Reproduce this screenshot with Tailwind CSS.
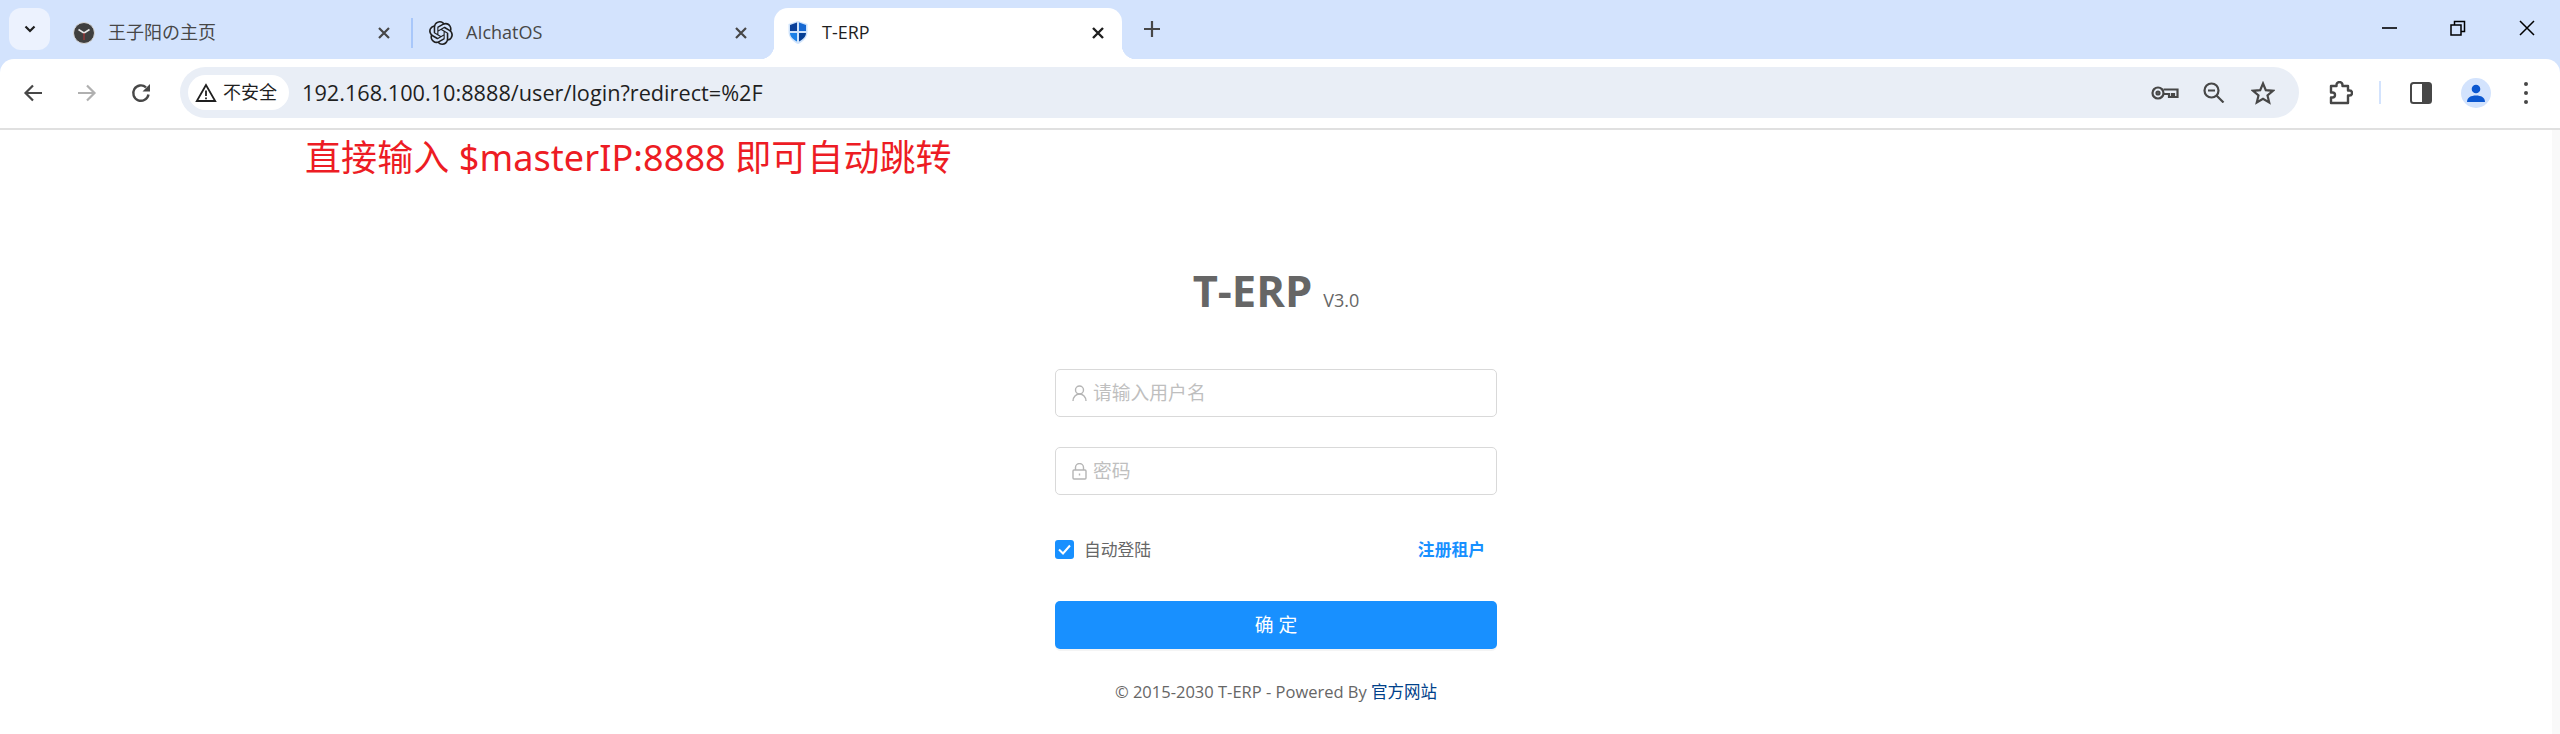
<!DOCTYPE html>
<html lang="zh">
<head>
<meta charset="utf-8">
<title>T-ERP</title>
<script src="https://cdn.jsdelivr.net/npm/@tailwindcss/browser@4"></script>
</head>
<body class="h-[734px] w-[2560px] overflow-hidden bg-white font-['Open_Sans','Noto_Sans_CJK_SC',sans-serif]">

<!-- tab strip -->
<div class="relative flex h-[59px] items-start bg-[#d3e3fd]">
  <button class="ml-[9px] mt-2 flex h-[42px] w-[41px] items-center justify-center rounded-[12px] bg-[#ecf2fe]">
    <svg width="14" height="14" viewBox="0 0 14 14" fill="none" stroke="#1f1f1f" stroke-width="2.2"><path d="M2.500 4.500 7 9l4.500-4.500"/></svg>
  </button>

  <div class="ml-[23px] mt-2 flex h-[51px] w-[338px] shrink-0 items-center pb-[2px]">
    <svg width="22" height="22" viewBox="0 0 22 22" class="shrink-0"><circle cx="11" cy="11" r="10.500" fill="#3f3f3f" stroke="#d8d8d8" stroke-width="1"/><path d="M11 11 5.500 7.500M11 11l5.500-3.500" stroke="#e8e8e8" stroke-width="1.600"/><path d="M11 11v7" stroke="#b33" stroke-width="1"/></svg>
    <span class="ml-[13px] text-[18px] text-[#474747]">王子阳の主页</span>
    <svg width="14" height="14" viewBox="0 0 14 14" class="ml-auto mr-[20px]" stroke="#474747" stroke-width="2.2"><path d="m2 2 10 10M12 2 2 12"/></svg>
  </div>
  <div class="mt-[18px] h-[30px] w-[2px] shrink-0 bg-[#a8c7fa]"></div>

  <div class="ml-[16px] mt-2 flex h-[51px] w-[337px] shrink-0 items-center pb-[2px]">
    <svg width="24" height="24" viewBox="0 0 24 24" fill="#1f1f1f" class="shrink-0"><path d="M22.2819 9.8211a5.9847 5.9847 0 0 0-.5157-4.9108 6.0462 6.0462 0 0 0-6.5098-2.9A6.0651 6.0651 0 0 0 4.9807 4.1818a5.9847 5.9847 0 0 0-3.9977 2.9 6.0462 6.0462 0 0 0 .7427 7.0966 5.98 5.98 0 0 0 .511 4.9107 6.051 6.051 0 0 0 6.5146 2.9001A5.9847 5.9847 0 0 0 13.2599 24a6.0557 6.0557 0 0 0 5.7718-4.2058 5.9894 5.9894 0 0 0 3.9977-2.9001 6.0557 6.0557 0 0 0-.7475-7.0729zm-9.022 12.6081a4.4755 4.4755 0 0 1-2.8764-1.0408l.1419-.0804 4.7783-2.7582a.7948.7948 0 0 0 .3927-.6813v-6.7369l2.02 1.1686a.071.071 0 0 1 .038.052v5.5826a4.504 4.504 0 0 1-4.4945 4.4944zm-9.6607-4.1254a4.4708 4.4708 0 0 1-.5346-3.0137l.142.0852 4.783 2.7582a.7712.7712 0 0 0 .7806 0l5.8428-3.3685v2.3324a.0804.0804 0 0 1-.0332.0615L9.74 19.9502a4.4992 4.4992 0 0 1-6.1408-1.6464zM2.3408 7.8956a4.485 4.485 0 0 1 2.3655-1.9728V11.6a.7664.7664 0 0 0 .3879.6765l5.8144 3.3543-2.0201 1.1685a.0757.0757 0 0 1-.071 0l-4.8303-2.7865A4.504 4.504 0 0 1 2.3408 7.872zm16.5963 3.8558L13.1038 8.364 15.1192 7.2a.0757.0757 0 0 1 .071 0l4.8303 2.7913a4.4944 4.4944 0 0 1-.6765 8.1042v-5.6772a.79.79 0 0 0-.407-.667zm2.0107-3.0231l-.142-.0852-4.7735-2.7818a.7759.7759 0 0 0-.7854 0L9.409 9.2297V6.8974a.0662.0662 0 0 1 .0284-.0615l4.8303-2.7866a4.4992 4.4992 0 0 1 6.6802 4.66zM8.3065 12.863l-2.02-1.1638a.0804.0804 0 0 1-.038-.0567V6.0742a4.4992 4.4992 0 0 1 7.3757-3.4537l-.142.0805L8.704 5.459a.7948.7948 0 0 0-.3927.6813zm1.0976-2.3654l2.602-1.4998 2.6069 1.4998v2.9994l-2.5974 1.4997-2.6067-1.4997Z"/></svg>
    <span class="ml-[13px] text-[18px] text-[#474747]">AIchatOS</span>
    <svg width="14" height="14" viewBox="0 0 14 14" class="ml-auto mr-[18px]" stroke="#474747" stroke-width="2.2"><path d="m2 2 10 10M12 2 2 12"/></svg>
  </div>

  <div class="relative ml-[8px] mt-2 flex h-[51px] w-[348px] shrink-0 items-center rounded-t-[14px] bg-white pb-[2px] pl-[14px]">
    <span class="absolute -left-[14px] bottom-0 h-[14px] w-[14px] bg-[radial-gradient(circle_at_0_0,#d3e3fd_14px,#fff_14.500px)]"></span>
    <svg width="20" height="23" viewBox="0 0 20 23" class="shrink-0"><path d="M10 0 19.500 3v8c0 5.500-4.500 10-9.500 12C5 21 .5 16.500.5 11V3Z" fill="#cfe3fb"/><path d="M9 1.500V10H2V4Z" fill="#0a3f99"/><path d="M11 1.500 18 4v6h-7Z" fill="#1668d2"/><path d="M2 12h7v8.500C5 18.500 2 15.500 2 12Z" fill="#1a7fe6"/><path d="M11 12h7c0 3.500-3 6.500-7 8.500Z" fill="#063f95"/></svg>
    <span class="ml-[14px] text-[18px] text-[#1f1f1f]">T-ERP</span>
    <svg width="14" height="14" viewBox="0 0 14 14" class="ml-auto mr-[17px]" stroke="#1f1f1f" stroke-width="2.4"><path d="m2 2 10 10M12 2 2 12"/></svg>
    <span class="absolute -right-[14px] bottom-0 h-[14px] w-[14px] bg-[radial-gradient(circle_at_100%_0,#d3e3fd_14px,#fff_14.500px)]"></span>
  </div>

  <svg width="16" height="16" viewBox="0 0 16 16" stroke="#474747" stroke-width="2.2" class="ml-[22px] mt-[21px]"><path d="M8 0v16M0 8h16"/></svg>

  <div class="ml-auto flex items-center pt-[20px]">
    <svg width="16" height="16" viewBox="0 0 16 16" stroke="#000" stroke-width="1.600"><path d="M1 8h15"/></svg>
    <svg width="16" height="16" viewBox="0 0 16 16" fill="none" stroke="#000" stroke-width="1.500" class="ml-[53px]"><path d="M1 5h10v10H1zM4.500 5V1.500h10v10H11"/></svg>
    <svg width="16" height="16" viewBox="0 0 16 16" stroke="#000" stroke-width="1.500" class="ml-[53px] mr-[25px]"><path d="m1 1 14 14M15 1 1 15"/></svg>
  </div>
</div>

<!-- toolbar -->
<div class="flex h-[71px] items-center border-b-2 border-[#e0e0e0] bg-[#d3e3fd]">
  <div class="flex h-full w-full items-center rounded-t-[14px] bg-white pb-[2px]">
    <svg width="20" height="18" viewBox="0 0 20 18" fill="none" stroke="#474747" stroke-width="2.2" class="ml-[23px]"><path d="M19 9H3M10 1.500 2.500 9l7.500 7.500"/></svg>
    <svg width="20" height="18" viewBox="0 0 20 18" fill="none" stroke="#b0b0b0" stroke-width="2.2" class="ml-[34px]"><path d="M1 9h16M10 1.500 17.500 9 10 16.500"/></svg>
    <svg width="20" height="20" viewBox="0 0 20 20" fill="none" stroke="#474747" stroke-width="2.400" class="ml-[34px]"><path d="M17.500 11.500A7.700 7.700 0 1 1 15 4.300"/><path d="M19 1v7.500h-7.500Z" stroke="none" fill="#474747"/></svg>

    <div class="ml-[29px] flex h-[51px] w-[2119px] items-center rounded-full bg-[#e9eef6] pl-2">
      <div class="flex h-[35px] w-[101px] items-center rounded-full bg-white pl-[7px]">
        <svg width="22" height="20" viewBox="0 0 22 20" fill="none" stroke="#1f1f1f" stroke-width="1.800"><path d="M11 2 1.800 18h18.400Z"/><path d="M11 7.500v5.500M11 14.500v1.800"/></svg>
        <span class="ml-[6px] text-[18px] text-[#1f1f1f]">不安全</span>
      </div>
      <span class="ml-[13px] pt-[2px] text-[21.700px] text-[#1f1f1f]">192.168.100.10:8888/user/login?redirect=%2F</span>
      <div class="ml-auto flex items-center pr-[24px]">
        <svg width="28" height="14" viewBox="0 0 28 14" fill="none" stroke="#474747" stroke-width="2.200"><circle cx="7" cy="7" r="5.500"/><circle cx="7" cy="7" r="1.500"/><path d="M12.500 3.500h14V11H23V8h-2v3h-3V8h-5.500"/></svg>
        <svg width="22" height="21" viewBox="0 0 22 21" fill="none" stroke="#474747" stroke-width="2.200" class="ml-[24px]"><circle cx="8.500" cy="8.500" r="7"/><path d="M5 8.500h7M13.500 13.500l7 7"/></svg>
        <svg width="24" height="24" viewBox="0 0 24 24" fill="none" stroke="#474747" stroke-width="2.200" class="ml-[26px]"><path d="m12 2.500 2.800 6.700 7.200.6-5.500 4.700 1.700 7L12 17.800 5.800 21.500l1.700-7L2 9.800l7.200-.6Z"/></svg>
      </div>
    </div>

    <svg width="25" height="24" viewBox="0 0 25 24" fill="none" stroke="#474747" stroke-width="2.400" class="ml-[29px]"><path d="M3 5h5.500V4a3 3 0 0 1 6 0v1H20v4.500h1.500a2.500 2.500 0 0 1 0 5H20V22H3v-5.500h1.500a2.500 2.500 0 0 0 0-5H3Z" stroke-linejoin="round"/></svg>
    <div class="ml-[26px] h-[23px] w-[2px] bg-[#d3e3fd]"></div>
    <svg width="22" height="22" viewBox="0 0 22 22" class="ml-[29px]"><rect x="1" y="1" width="20" height="20" rx="2.500" fill="#fff" stroke="#474747" stroke-width="2"/><path d="M12 1h7a2 2 0 0 1 2 2v16a2 2 0 0 1-2 2h-7Z" fill="#474747"/></svg>
    <div class="ml-[29px] flex h-[30px] w-[30px] items-center justify-center overflow-hidden rounded-full bg-[#d3e3fd]">
      <svg width="20" height="20" viewBox="0 0 20 20" fill="#0b57d0"><circle cx="10" cy="6" r="4.300"/><path d="M1 19c0-4.500 4-6.500 9-6.500s9 2 9 6.500Z"/></svg>
    </div>
    <div class="ml-[33px] flex flex-col gap-[5px]">
      <span class="h-1 w-1 rounded-full bg-[#474747]"></span>
      <span class="h-1 w-1 rounded-full bg-[#474747]"></span>
      <span class="h-1 w-1 rounded-full bg-[#474747]"></span>
    </div>
  </div>
</div>

<!-- page -->
<div class="flex h-[604px]">
  <div class="min-w-0 flex-1">
    <p class="ml-[305px] pt-[3px] text-[36px] leading-[50px] tracking-[0.08px] text-[#ed1c24] font-['Noto_Sans','Noto_Sans_CJK_SC',sans-serif]">直接输入 $masterIP:8888 即可自动跳转</p>

    <div class="mx-auto mt-[81px] w-[442px]">
      <div class="flex h-[54px] items-baseline justify-center">
        <h1 class="text-[43.500px] font-bold leading-[54px] text-[#666]">T-ERP</h1>
        <span class="ml-[11px] text-[18px] text-[#666]">V3.0</span>
      </div>

      <div class="mt-[51px] flex h-[48px] items-center rounded-[5px] border border-[#d9d9d9] pl-[16px]">
        <svg width="15" height="17" viewBox="0 0 15 17" fill="none" stroke="#b5b5b5" stroke-width="1.400"><circle cx="7.500" cy="5" r="4"/><path d="M1 16c0-4 3-7 6.500-7S14 12 14 16"/></svg>
        <span class="ml-[6px] text-[18.800px] text-[#bfbfbf]">请输入用户名</span>
      </div>

      <div class="mt-[30px] flex h-[48px] items-center rounded-[5px] border border-[#d9d9d9] pl-[16px]">
        <svg width="15" height="17" viewBox="0 0 15 17" fill="none" stroke="#b5b5b5" stroke-width="1.400"><rect x="1" y="7" width="13" height="9" rx="1"/><path d="M3.500 7V4.500a4 4 0 0 1 8 0V7M7.500 10.500v2"/></svg>
        <span class="ml-[6px] text-[18.800px] text-[#bfbfbf]">密码</span>
      </div>

      <div class="mt-[45px] flex h-[19px] items-center">
        <span class="flex h-[19px] w-[19px] items-center justify-center rounded-[3px] bg-[#1890ff]">
          <svg width="13" height="11" viewBox="0 0 13 11" fill="none" stroke="#fff" stroke-width="2"><path d="m1 5.500 4 4L12 1.500"/></svg>
        </span>
        <span class="ml-[10px] text-[16.800px] text-[#666]">自动登陆</span>
        <a class="ml-auto mr-[12px] text-[16.800px] font-bold text-[#1890ff]">注册租户</a>
      </div>

      <button class="mt-[42px] h-[48px] w-full rounded-[5px] bg-[#1890ff] text-[18.800px] text-white shadow-[0_2px_0_rgba(0,0,0,0.045)]">确 定</button>

      <p class="mt-[31px] text-center text-[16.500px] text-[#666]">© 2015-2030 T-ERP - Powered By <a class="text-[#00418a]">官方网站</a></p>
    </div>
  </div>
  <div class="w-[8px] bg-[#f9f9f9]"></div>
</div>

</body>
</html>
